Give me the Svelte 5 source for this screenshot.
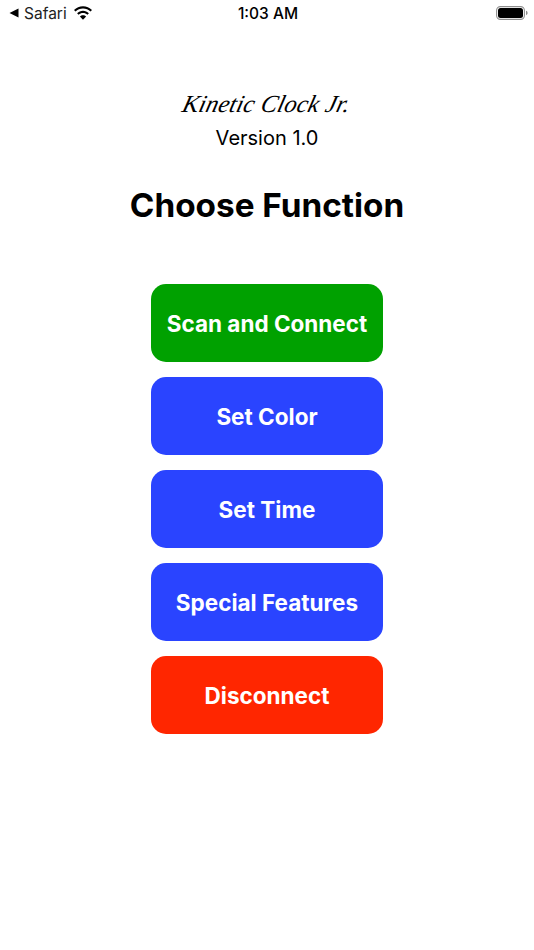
<script lang="ts">
  const buttons = [
    { label: 'Scan and Connect', color: 'green' },
    { label: 'Set Color', color: 'blue' },
    { label: 'Set Time', color: 'blue' },
    { label: 'Special Features', color: 'blue' },
    { label: 'Disconnect', color: 'red' },
  ];
</script>

<div class="screen">
  <div class="status-bar">
    <div class="status-left">
      <svg class="back" viewBox="0 0 10 10" width="10" height="10"><path d="M0.5 5 L9.5 0.5 V9.5 Z" fill="#000" /></svg>
      <span class="back-label">Safari</span>
      <svg class="wifi" viewBox="0 0 20 15" width="20" height="15">
        <path d="M10 2.6c2.9 0 5.500 1.100 7.500 3l1.500-1.600C16.600 1.700 13.400.3 10 .3S3.400 1.700 1 4l1.500 1.600c2-1.900 4.600-3 7.500-3z" fill="#000" />
        <path d="M10 7.100c1.700 0 3.200.6 4.400 1.700l1.500-1.600C14.300 5.700 12.200 4.800 10 4.800s-4.300.9-5.900 2.400l1.500 1.600C6.800 7.700 8.300 7.100 10 7.100z" fill="#000" />
        <path d="M10 9.300c-1.200 0-2.300.5-3.100 1.200L10 13.800l3.100-3.300C12.300 9.800 11.200 9.300 10 9.300z" fill="#000" />
      </svg>
    </div>
    <span class="clock">1:03 AM</span>
    <svg class="battery" viewBox="0 0 32 14" width="32" height="14">
      <rect x="0.6" y="0.6" width="27.800" height="12.800" rx="3.800" fill="none" stroke="#8e8e8e" stroke-width="1.100" />
      <rect x="2" y="2" width="25" height="10" rx="2.500" fill="#000" />
      <path d="M30 4.800c1 .3 1.600 1.200 1.600 2.200s-.6 1.900-1.600 2.200z" fill="#8e8e8e" />
    </svg>
  </div>

  <div class="brand">Kinetic Clock Jr.</div>
  <div class="version">Version 1.0</div>
  <h1>Choose Function</h1>

  <div class="actions">
    {#each buttons as btn}
      <button class="action {btn.color}">{btn.label}</button>
    {/each}
  </div>
</div>

<style>
  :global(body) {
    margin: 0;
    background: #fff;
  }

  .screen {
    width: 534px;
    height: 950px;
    display: flex;
    flex-direction: column;
    align-items: center;
    overflow: hidden;
    font-family: Inter, "Liberation Sans", sans-serif;
    color: #000;
  }

  .status-bar {
    align-self: stretch;
    height: 26px;
    display: grid;
    grid-template-columns: 1fr auto 1fr;
    align-items: center;
    padding: 0 7px 0 9px;
  }

  .status-left {
    display: flex;
    align-items: center;
  }

  .back {
    margin-right: 5px;
  }

  .back-label {
    font-size: 15.500px;
    margin-right: 6px;
    color: #222;
  }

  .clock {
    font-size: 15.500px;
    font-weight: 500;
  }

  .battery {
    justify-self: end;
    transform: translateX(1px);
  }

  .brand {
    margin-top: 64px;
    height: 28px;
    line-height: 28px;
    font-family: "Liberation Serif", serif;
    font-style: italic;
    font-size: 24.500px;
    letter-spacing: 0.2px;
    white-space: nowrap;
    transform: skewX(-14deg);
  }

  .version {
    margin-top: 7px;
    font-size: 20px;
    line-height: 26px;
  }

  h1 {
    margin: 33px 0 0;
    font-size: 33.300px;
    line-height: 42px;
    font-weight: 700;
  }

  .actions {
    margin-top: 58px;
    display: flex;
    flex-direction: column;
    gap: 15px;
  }

  .action {
    width: 232px;
    height: 78px;
    border: none;
    border-radius: 15px;
    padding: 0;
    color: #fff;
    font-family: inherit;
    font-size: 22.500px;
    font-weight: 650;
  }

  .green {
    background: #00a100;
  }

  .blue {
    background: #2a44ff;
  }

  .red {
    background: #ff2600;
  }
</style>
